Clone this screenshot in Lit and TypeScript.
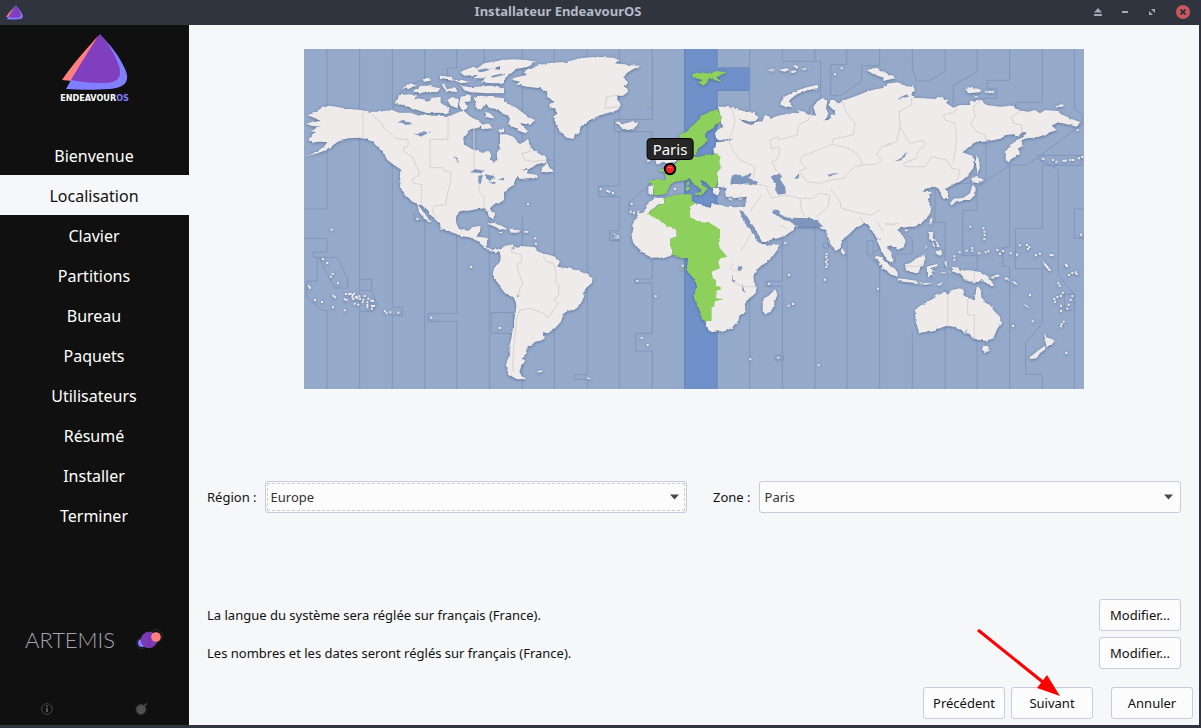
import { LitElement, html, css, svg } from "lit";
import { customElement, state } from "lit/decorators.js";
import { classMap } from "lit/directives/class-map.js";
import { styleMap } from "lit/directives/style-map.js";

interface Tile {
  x: number;
  y: number;
  land: string;
  active?: string;
  water?: string;
  borders?: string;
  islets?: number[][];
}

/* World map, split in eight sheets; each sheet has its own origin on the 2340 x 1020 canvas. */
const TILES: Tile[] = [
  {
    x: 0,
    y: -12,
    land: `M8,237 20,232 38,230 50,228 30,218 12,212 20,205 38,198 55,188 75,182 100,186 130,192 165,194 200,200 230,200 262,194 285,203 320,203 345,212 360,207 385,212 440,212 452,206 478,196 500,216 520,225 535,238 520,250 505,252 490,262 478,278 480,298 500,310 530,320 555,318 562,330 558,345 570,350 580,345 578,325 588,312 585,298 600,280 600,465 585,475 565,480 558,492 572,512 568,522 555,515 545,490 520,492 495,497 470,497 455,515 458,545 415,545 400,530 385,510 365,490 348,480 325,470 310,455 295,440 285,420 290,395 292,375 270,360 250,345 238,325 225,310 205,290 185,282 165,278 135,280 110,285 88,300 70,315 40,325 8,334 0,336 30,325 60,305 70,292 50,290 30,292 12,285 20,275 35,262 20,258 45,245 25,243Z
      M340,476 350,490 360,505 382,530 375,532 355,515 345,500Z
      M285,150 320,148 340,155 320,170 300,180 275,178Z
      M320,165 345,160 370,170 385,158 410,155 410,175 440,190 430,205 400,203 370,205 340,195 320,190 300,182Z
      M295,130 325,112 335,120 315,132Z M330,138 350,122 375,122 405,130 400,142 370,140 345,146Z
      M355,102 380,98 380,108 360,110Z M408,92 440,95 450,108 430,105 408,102Z M410,118 420,115 430,135 455,125 460,138 430,142Z
      M430,165 445,155 465,165 460,190 440,182Z M470,155 500,150 500,165 485,175 490,190 475,198 465,180Z
      M510,160 530,152 560,155 600,160 600,195 575,192 555,188 545,175 530,195 515,180Z
      M470,122 500,127 560,122 600,130 600,145 550,145 500,142 478,135Z
      M468,80 500,68 520,70 540,55 600,45 600,60 560,72 600,75 600,115 560,115 530,112 545,100 510,100 520,90 480,92Z
      M450,105 475,105 500,112 470,115Z M530,240 555,235 565,250 545,252 532,248Z M540,200 562,205 568,222 545,215Z M585,255 600,250 600,262 590,262Z`,
    water: `M280,232 300,225 310,230 328,235 305,240 295,234Z M333,265 355,262 383,260 365,268 350,275Z M448,332 458,340 466,355 458,350Z M498,382 515,372 543,378 525,384Z M523,392 537,390 530,417 523,415Z M542,388 572,393 562,408 548,402Z M552,414 578,408 572,417Z M578,404 600,398 600,406Z M520,75 545,70 560,74 530,82Z M560,92 600,85 600,90 565,98Z`,
    borders: `M177,197V280 M205,208 215,220 235,235 240,250 265,270 275,280 312,284 312,305 298,308 300,320 325,335 335,360 348,388 325,402 328,415 352,418 352,480 M432,215V283H378V368H415L420,378 440,382 440,410 430,445 425,480 390,482 385,500 400,520 M510,250V370 M527,420 525,440 540,455 538,480 545,492`,
  },
  {
    x: 588,
    y: -12,
    land: `M0,45 40,43 80,45 108,50 85,65 50,72 30,88 0,108Z
      M35,100 80,90 70,80 100,65 140,55 200,50 240,40 290,35 340,38 360,45 345,55 385,60 425,62 400,72 380,85 370,100 385,112 375,125 385,140 365,155 350,150 362,180 355,195 320,205 290,215 260,232 242,245 238,262 225,270 220,282 200,278 180,262 168,240 160,215 172,205 165,190 150,190 148,178 160,170 145,155 140,140 120,130 80,125 50,118 60,110 35,105Z
      M-5,158 20,175 45,185 65,200 85,215 105,225 90,240 60,235 85,260 70,265 40,245 25,238 30,220 -5,195Z
      M0,268 20,268 40,275 60,298 80,282 95,310 115,325 140,340 138,352 110,358 90,372 60,375 85,375 80,385 115,390 110,402 85,400 60,402 50,395 40,420 15,438 5,460 -5,465 -5,315 5,310 8,300 0,290Z
      M122,380 140,352 150,370 162,380 140,382Z
      M345,230 358,230 370,238 400,228 415,238 400,252 380,255 360,245Z
      M440,348 450,338 450,350Z M465,340 535,340 525,352 490,352 470,360Z
      M445,425 462,418 458,450 445,445Z
      M465,458 490,458 495,475 470,480 448,500 500,545 395,545 410,515 435,495 440,480Z
      M568,485 582,475 605,478 605,532 570,520Z`,
    active: `M605,216 585,235 560,260 538,270 540,290 575,290 605,300Z M580,338 540,345 525,355 510,370 480,372 478,378 495,385 498,405 450,405 445,412 462,420 460,450 480,450 500,445 510,420 525,410 560,405 575,400 585,408 605,425 605,335Z
      M560,412 567,412 567,420 560,422Z M558,425 568,425 568,437 558,437Z
      M492,460 510,452 545,448 575,448 575,470 586,476 570,485 570,520 605,534 605,545 500,545 450,500 470,482 495,475Z M445,182h8v4h-8z`,
    borders: `M90,300 90,320 65,325 75,345 100,350 138,345 M360,150 320,155 315,190 355,185`,
    islets: [[84, 478], [302, 433], [322, 438], [328, 440], [339, 444], [395, 476], [392, 500], [402, 503], [415, 500], [525, 432]],
  },
  {
    x: 1158,
    y: -12,
    land: `M83,185 100,185 125,188 140,192 165,200 195,205 205,215 198,228 180,230 160,225 148,222 165,235 185,240 195,232 215,228 225,210 240,215 240,222 262,212 290,208 310,203 328,205 320,195 345,200 350,210 365,208 378,212 370,185 385,165 400,160 412,170 408,190 415,205 410,220 400,226 415,225 425,208 440,210 430,195 415,180 425,165 445,175 465,165 500,152 530,140 560,132 605,125 605,545 540,545 525,535 505,545 400,545 385,522 310,518 300,528 325,545 -5,545 -5,480 20,478 45,485 62,488 65,478 85,478 110,485 140,487 165,482 170,455 130,460 108,455 105,440 110,430 85,425 80,380 92,365 85,350 90,335 72,325 70,310 78,300 78,292 100,290 78,280 75,265 82,255 100,245 92,230 90,205Z
      M68,428 88,428 83,452 74,448Z
      M270,178 283,155 312,140 350,127 383,119 383,129 350,137 322,147 302,162 297,170 308,187 280,184Z
      M530,75 560,68 585,85 605,95 575,97 550,88Z
      M230,75 255,73 250,80Z M268,74 290,70 300,75 280,80Z M310,65 325,62 322,72Z M330,72 358,68 345,76Z M300,78 320,76 312,84Z M115,460 132,462 118,465Z M145,461 160,459 150,465Z`,
    active: `M-5,252 20,235 40,210 60,200 80,193 90,205 92,230 75,240 70,250 50,260 45,275 55,285 40,300 25,310 20,320 10,322 -5,315Z M10,318 18,318 18,330 8,330Z
      M-5,335 30,335 50,330 80,325 92,335 88,350 92,365 80,380 85,395 80,425 65,430 50,415 30,400 15,395 20,405 30,415 50,430 45,440 35,450 30,445 35,435 15,420 -5,400Z
      M15,443 35,443 30,452Z M-5,450 6,455 3,470 -5,477Z
      M5,88 30,82 50,85 80,78 110,82 100,90 80,95 95,110 70,105 60,100 50,115 40,122 25,112 38,105 10,98Z`,
    water: `M118,412 128,390 150,386 150,395 165,394 185,382 175,398 205,412 200,420 170,415 140,420 120,420Z M242,395 265,383 280,390 270,402 285,425 288,445 265,450 255,435 258,420Z M315,395 328,385 326,400 318,402Z M413,390 430,385 452,385 430,389 418,395Z M248,492 262,495 275,510 295,518 330,520 380,525 400,545 325,545 300,530 285,525 265,515 250,505Z M148,495 160,500 175,525 189,545 170,545 158,522Z M92,284 130,281 118,287 95,290Z`,
    borders: `M125,190 135,225 128,255 115,285 130,320 150,345 195,365 190,400 M365,205 355,225 325,240 322,270 285,280 265,285 265,275 240,285 245,312 265,305 270,320 260,345 245,350 260,380 M460,170 465,195 495,235 490,270 430,282 425,298 335,335 330,350 350,370 328,378 350,410 390,415 420,405 460,400 495,365 520,360 500,325 470,308 425,298 M520,360 560,358 575,345 560,330 575,305 600,295 M205,418 235,425 M230,430 245,460 285,450 330,460 335,500 345,515 M330,460 370,460 385,445 420,450 415,485 380,515 M420,430 450,470 455,490 510,505 545,510 570,495 M215,450 180,500`,
    islets: [[455, 70], [435, 88]],
  },
  {
    x: 1743,
    y: -12,
    land: `M-5,125 15,115 40,112 50,122 85,125 90,135 80,148 70,155 60,150 88,150 85,158 120,160 150,162 160,155 190,165 185,175 205,188 225,180 255,180 255,168 285,165 305,180 345,185 385,182 395,195 430,200 450,195 465,205 480,195 520,198 535,210 560,222 587,232 575,245 545,238 520,232 500,242 515,255 480,268 450,278 425,280 410,285 412,300 400,315 405,325 380,345 370,352 362,345 362,320 375,300 390,290 410,278 425,262 410,262 400,275 385,268 365,270 345,282 300,290 275,290 250,310 232,322 262,332 270,345 265,370 245,395 225,410 200,420 180,432 190,445 190,462 175,462 168,445 160,430 145,425 120,432 115,440 140,440 135,455 128,465 140,485 135,505 120,525 90,545 -5,545Z
      M275,330 283,350 285,375 278,388 275,370 272,350Z M262,400 275,393 297,405 280,415 262,412Z M265,420 272,430 270,450 255,465 235,465 215,468 200,482 195,475 205,462 235,458 255,445 260,425Z M135,522 143,518 138,535 132,538Z
      M240,133 260,126 290,135 285,142 250,145Z M298,137 330,139 328,144 305,143Z M262,152 280,155 275,160Z M512,180 535,178 535,185 515,186Z M-5,95 20,90 35,100 10,104 -5,108Z`,
    water: `M28,350 50,338 64,318 60,335 45,346Z M36,162 65,148 72,155Z`,
    borders: `M80,160 80,180 42,200 45,245 65,280 75,295 115,285 122,300 100,315 95,340 55,355 60,365 120,365 140,335 185,345 200,370 225,375 215,410 185,430 M45,245 35,290 0,305 M215,190 210,200 175,210 180,225 210,235 215,280 210,320 205,350 M285,170 265,185 270,215 258,235 275,260 300,270 305,290 M405,200 380,215 385,235 410,240 410,265 M0,535 30,540`,
    islets: [[475, 342], [504, 345], [514, 350], [536, 347], [542, 347], [556, 345], [564, 345], [582, 340], [578, 255], [592, 336]],
  },
  {
    x: 0,
    y: 498,
    land: `M375,-5 458,-5 455,20 465,42 490,47 505,35 527,33 525,50 518,65 550,68 548,95 565,105 585,102 605,105 605,115 585,108 575,115 560,110 540,95 520,78 500,68 470,62 440,50 412,40 408,25 395,15Z M350,-12 358,-8 382,22 370,15 358,2Z`,
    islets: [
      [57, 132], [70, 144], [86, 177], [80, 185], [102, 205], [14, 214], [18, 218], [33, 255], [54, 261], [88, 242], [93, 247],
      [87, 277], [122, 286], [126, 237], [135, 238], [122, 253], [128, 255], [140, 236], [146, 240], [150, 236], [145, 246], [155, 247],
      [160, 250], [166, 244], [158, 245], [168, 252], [182, 243], [178, 254], [176, 262], [193, 251], [190, 262], [190, 270],
      [190, 277], [202, 257], [207, 258], [204, 273], [210, 273], [204, 281], [152, 266], [163, 269], [148, 252], [243, 289],
      [248, 295], [259, 292], [283, 293], [382, 308], [501, 156], [587, 339], [83, 44], [340, 12],
    ],
  },
  {
    x: 528,
    y: 498,
    land: `M62,102 75,92 100,88 105,95 125,93 165,97 175,110 200,118 225,125 240,140 232,155 255,158 290,165 320,178 338,190 335,205 315,222 312,245 300,270 290,280 262,290 248,298 245,318 225,340 205,355 188,352 195,368 185,377 160,380 155,395 140,397 140,415 125,430 135,440 125,450 118,470 125,480 138,492 115,493 100,488 85,480 80,465 78,450 82,435 90,420 88,395 95,365 100,330 107,290 110,260 100,248 75,235 60,215 45,190 38,178 42,160 60,140 62,125 58,108Z
      M18,25 45,25 80,40 78,44 58,42 40,33Z M88,43 120,46 118,53 92,53Z M56,48 68,49 66,55 58,54Z M133,47 148,48 147,53 134,53Z M30,-8 45,-8 43,12 35,6Z
      M172,468 188,466 186,471 175,473Z M318,486 332,490 328,493Z M400,57 418,62 415,72 403,70Z
      M470,-5 510,-5 530,8 560,25 590,45 590,65 570,72 570,90 578,105 575,120 560,127 515,128 495,118 475,100 460,85 455,65 460,40 458,28 475,5Z
      M620,-5 665,-5 665,28 645,18Z`,
    active: `M500,-5 628,-5 632,8 665,25 665,300 655,275 642,250 645,230 652,215 640,190 620,165 625,130 610,130 595,122 575,120 578,105 570,90 570,72 590,65 590,45Z M597,158h10v6h-10z`,
    water: `M402,62 412,62 410,67 402,67Z M97,96 103,97 102,104 98,103Z M111,240 118,242 117,246 111,245Z`,
    borders: `M92,95 95,112 125,120 125,140 112,145 115,170 128,205 118,225 115,245 M190,125 200,140 220,145 228,175 228,205 238,210 235,240 220,255 235,265 205,308 190,295 150,280 120,285 110,310 102,390 98,440 100,470`,
    islets: [[472, 198], [527, 244], [485, 369], [503, 390], [59, 339], [608, 152], [166, 70], [168, 86]],
  },
  {
    x: 1158,
    y: 498,
    land: `M-5,-5 150,-5 165,25 190,55 212,85 230,92 268,88 262,105 245,128 225,145 205,160 190,180 192,200 200,215 198,235 180,248 163,265 168,285 160,295 148,302 145,318 125,338 105,348 75,350 62,352 55,345 45,316 60,280 60,60 -5,18Z
      M218,262 222,250 240,240 255,222 262,238 250,275 240,295 225,298 218,285Z
      M165,-5 290,-5 305,10 322,28 310,45 285,62 265,70 240,75 218,82 205,60 188,28Z
      M365,-5 605,-5 605,92 590,98 605,112 605,122 582,110 575,95 572,72 560,70 552,55 540,40 528,25 515,30 500,35 475,60 455,75 452,100 438,108 425,95 412,70 408,45 390,38 372,12Z
      M457,100 467,110 462,120 455,115Z M555,124 575,130 605,160 605,175 580,148Z`,
    active: `M-5,15 35,22 60,25 90,42 90,70 85,80 90,100 112,125 92,130 85,140 90,160 65,170 68,190 78,195 78,213 92,215 92,225 80,230 78,250 100,252 95,256 75,258 72,278 65,280 65,318 45,318 35,310 30,280 12,250 15,235 22,215 20,190 -5,165Z`,
    water: `M142,155 157,153 152,168 142,166Z M124,175 135,200 130,202Z M157,205 164,232 157,227Z M152,2 170,2 190,33 206,60 219,84 208,84 188,56 166,26Z`,
    borders: `M185,50 165,90 152,110 M130,145 120,160 140,170 M125,200 160,215 198,215 M270,30 290,40 M510,5 520,25 M560,20 580,50`,
    islets: [
      [297, 180], [237, 206], [296, 272], [309, 267], [181, 433], [265, 428], [386, 451], [405, 194], [564, 221], [410, 118],
      [409, 126], [412, 134], [408, 141], [412, 148], [409, 156], [286, 84], [570, 148], [578, 160],
    ],
  },
  {
    x: 1743,
    y: 498,
    land: `M-5,-10 138,-10 120,15 100,22 75,32 60,38 45,35 38,45 55,62 62,80 55,95 40,104 30,98 15,92 -5,85Z
      M-15,70 -5,95 15,115 25,135 22,145 5,135 -12,105 -22,75Z M58,45 70,42 65,50Z
      M-30,125 0,140 20,155 38,172 38,185 15,178 -10,150Z M38,190 65,193 95,197 95,204 60,201 40,198Z M100,202 130,204 145,203 120,210Z M155,209 174,201 165,212Z
      M60,148 75,145 95,130 118,118 122,130 115,145 108,160 95,175 75,170 62,162Z M125,155 155,147 160,152 135,160 148,165 140,172 150,182 138,179 130,188 126,175Z
      M132,50 145,52 143,68 152,82 140,78 133,68Z M150,78 160,85 168,98 158,92Z M150,112 168,104 172,118 160,122Z M142,84 150,92 150,98 143,92Z M135,15 143,10 138,26Z M114,104 128,92 128,96Z
      M200,155 220,158 225,168 250,165 290,172 310,185 328,212 310,208 285,195 268,205 240,195 230,180 205,170Z M315,188 338,178 345,182 325,191Z M170,172 182,172 182,175 170,175Z M178,142 186,142 183,158Z M190,170 200,170 200,174Z
      M90,285 105,272 130,262 145,250 155,238 175,232 190,238 200,225 225,220 238,225 235,240 250,250 268,252 272,235 275,215 285,220 290,245 300,262 315,270 325,285 345,305 348,325 335,345 325,370 300,378 285,375 262,370 255,358 248,355 240,358 230,345 205,335 185,332 165,340 140,350 115,352 102,355 100,345 92,320Z
      M290,392 313,393 310,408 300,412 292,405Z M477,355 488,368 510,375 500,390 485,397 482,385Z M480,392 482,402 465,415 455,430 435,433 440,422 462,405Z
      M357,187 368,191 374,198 362,194Z M378,196 390,200 402,212 390,208Z M418,267 434,276 432,279 420,272Z M474,137 486,150 500,168 492,168 477,150Z`,
    water: `M238,352 248,342 246,358Z`,
    borders: `M188,238V335 M248,252V300H268V372 M268,170V205 M62,152 95,155 110,148 M0,30 40,25`,
    islets: [
      [256, 35], [295, 40], [298, 50], [299, 60], [298, 72], [208, 124], [208, 134], [224, 112], [245, 107], [262, 99], [262, 107],
      [283, 115], [302, 112], [310, 109], [337, 105], [345, 116], [354, 108], [377, 115], [396, 119], [404, 91], [426, 90],
      [433, 96], [429, 102], [453, 121], [465, 116], [497, 120], [503, 121], [543, 149], [546, 153], [552, 180], [562, 174],
      [572, 172], [575, 177], [520, 205], [524, 212], [533, 233], [517, 246], [508, 252], [510, 260], [528, 243], [562, 243],
      [557, 254], [551, 269], [547, 281], [528, 272], [528, 288], [536, 320], [530, 327], [528, 334], [443, 319], [384, 333],
      [544, 414], [588, 59], [435, 240],
    ],
  },
];

const ZONE_LINES = `M69,0V480H0 M167,0V1020 M265,0V178L300,115 362,90V0 M265,300V775H295V799H265V1020 M458,0V57H430V100 M331,488V516H362 M362,478V1020 M458,560V793H371V817H458V1020 M541,0V70 M556,510V1020 M562,791H630V853H562Z M655,0V300 M655,500V1020 M751,0V1020 M690,333H751 M850,0V977H811V991H850V1020 M946,0V211 M1045,0V211H931V248H1045V268 M946,248V411H884V443H946V545H917V575H946V1020 M1045,618V690H992V702H1045V853H995V906H1045V1020 M975,495V462L1035,408
 M1337,0V190 M1238,56H1337 M1337,740V1020 M1435,0V37H1550V145L1516,175V195 M1533,0V37 M1628,0V47H1580V140H1605 M1727,0V50H1673V95L1610,140 M1435,560V697H1385V712H1435V1020 M1533,520V1020 M1629,570V1020 M1690,575h18v42h-18z M1708,610 1727,600 M1690,617 1727,652V1020 M1412,919h26v14h-26z M1558,583h16v14h-16z
 M1825,0V55L1838,97 1875,95 1923,68V0 M2019,0V70L1948,108V165 M2117,0V94H2050V118H2078V148H2030 M2215,0V160H2135V180 M2311,0V178L2335,198V225L2170,348H2117L2019,415V484H1976V620H2019V660L2010,670 M2046,278V390L1985,404H1940 M2117,348V595H2096V651H2117V1020 M2198,328 2263,362V678L2311,735V1020 M2198,319H2333V349H2215 M2215,349V538H2134V659H2215V822L2165,883V976H2215V1020 M2340,480H2311V568H2340 M1825,850V1020 M1810,560 1825,570V615H1775V640 M1923,720V1020 M1893,420V520H1923V660 M2019,870V1020 M2281,736h31v48h-31z
 M0,568H69V609H27V625H99L131,690V717H92L45,625 M40,625V697H8V745L53,784H69V1020 M167,787H203L220,767 203,724H167 M167,691H203V724`;

const STEPS = ["Bienvenue", "Localisation", "Clavier", "Partitions", "Bureau", "Paquets", "Utilisateurs", "Résumé", "Installer", "Terminer"];

const sail = svg`
  <path fill="#ff7f7f" d="M37 1C25 14 10 31 0 46l10 1z"/>
  <path fill="#7f7fff" d="M38 1c10 9 20 22 25 34 6 13-1 19-15 20-14 1-30 1-44 0l5-9z"/>
  <path fill="#7f3fbf" d="M38 0c8 9 15 20 19 32 4 14-4 17-17 17-11 0-21-1-31-3C18 31 28 14 38 0z"/>`;

@customElement("world-map")
class WorldMap extends LitElement {
  static styles = css`
    :host { display: block; position: relative; width: 100%; max-width: 780px; }
    .map { display: block; width: 100%; height: auto; background: #95a9ca; }
    .zones { fill: none; stroke: #8196ba; stroke-width: 3; }
    .band { fill: #6f90c8; stroke: #6382b8; stroke-width: 3; }
    .shade { filter: drop-shadow(0 2px 5px rgba(62, 88, 130, 0.75)); }
    .land { fill: #efebea; }
    .active { fill: #8dd15c; }
    .water { fill: #7f96bc; }
    .borders { fill: none; stroke: #d6d2d1; stroke-width: 3; }
    .pin { position: absolute; width: 14px; height: 14px; transform: translate(-50%, -50%); }
    .dot { display: block; width: 14px; height: 14px; }
    .name {
      position: absolute; bottom: 16px; left: 50%; transform: translateX(-50%);
      padding: 0 5px; border: 1px solid #000; border-radius: 4px;
      background: #262626; color: #fff; font-size: 15px; line-height: 20px;
    }
  `;

  render() {
    const pin = { left: (366 / 780) * 100 + "%", top: (120 / 340) * 100 + "%" };
    return html`
      <svg class="map" viewBox="0 0 2340 1020" role="img" aria-label="Fuseaux horaires">
        <defs>
          <filter id="coast" x="0" y="0" width="100%" height="100%">
            <feTurbulence type="fractalNoise" baseFrequency="0.06" numOctaves="2" seed="4" result="n" />
            <feDisplacementMap in="SourceGraphic" in2="n" scale="9" xChannelSelector="R" yChannelSelector="G" />
          </filter>
        </defs>
        <path class="band" d="M1142,-5H1239V56H1337V124H1239V1025H1142Z" />
        <path class="zones" d=${ZONE_LINES} />
        <g class="shade">
          <g filter="url(#coast)">
            <rect width="2340" height="1020" fill="none" />
            ${TILES.map((t) => svg`<g transform="translate(${t.x} ${t.y})"><path class="land" d=${t.land} /></g>`)}
            ${TILES.map((t) => svg`<g transform="translate(${t.x} ${t.y})"><path class="active" d=${t.active ?? ""} /><path class="water" d=${t.water ?? ""} /></g>`)}
          </g>
          ${TILES.map((t) => svg`<g transform="translate(${t.x} ${t.y})"><path class="borders" d=${t.borders ?? ""} /><path class="land" d=${(t.islets ?? []).map(([x, y]) => `M${x - 3},${y - 3}h6v6h-6z`).join("")} /></g>`)}
        </g>
      </svg>
      <div class="pin" style=${styleMap(pin)}>
        <svg class="dot" viewBox="0 0 14 14" aria-hidden="true">
          <circle cx="7" cy="7" r="5.2" fill="#e8232a" stroke="#000" stroke-width="2" />
          <path d="M4.5 6a3 3 0 0 1 5 0z" fill="#f4686a" />
        </svg>
        <span class="name">Paris</span>
      </div>
    `;
  }
}

@customElement("app-root")
class AppRoot extends LitElement {
  @state() private current = 1;

  static styles = css`
    :host {
      display: grid; grid-template-rows: 25px 1fr; box-sizing: border-box; min-height: 100vh;
      padding: 0 2px 3px 0; background: #2f343f; color: #111;
      font-family: "Noto Sans", sans-serif; font-size: 13px; line-height: 20px;
    }
    * { box-sizing: border-box; }
    svg { display: block; }
    .bar { display: flex; align-items: center; margin-right: -2px; padding-left: 6px; height: 25px; }
    .mark { width: 17px; height: 15px; margin-right: 9px; }
    .title { flex: 1; margin: 0; padding-bottom: 3px; text-align: center; font-size: 13px; line-height: 20px; font-weight: 700; color: #b4bac6; }
    .wm { display: flex; padding-bottom: 2px; }
    .wm button { display: grid; place-items: center; width: 27px; height: 22px; padding: 0; border: 0; background: none; }
    .wm button:last-child { width: 36px; }
    .body { display: grid; grid-template-columns: 189px 1fr; }
    .side { display: flex; flex-direction: column; background: #101010; padding-top: 9px; }
    .logo { align-self: center; width: 66px; height: 56px; }
    .brand { margin-bottom: 29px; text-align: center; font: 700 9px/16px "DejaVu Sans Condensed", "DejaVu Sans", sans-serif; color: #fff; }
    .os { color: #7f7fff; }
    .steps { list-style: none; margin: 0; padding: 0; }
    .step { height: 40px; padding-right: 1px; font-size: 16px; line-height: 42px; text-align: center; color: #fff; }
    .step.on { background: #f5f7f8; color: #111; }
    .release { display: flex; align-items: center; justify-content: space-between; margin-top: auto; padding: 0 26px 0 25px; font: 300 22px/24px Lato, sans-serif; color: #a5a5b0; }
    .moon { width: 27px; height: 22px; }
    .links { display: flex; justify-content: space-around; padding: 45px 0 4px; }
    .links button { display: grid; place-items: center; width: 24px; height: 24px; padding: 0; border: 0; background: none; }
    .main { display: flex; flex-direction: column; background: #f5f7f8; padding-top: 24px; }
    .page { flex: 1; display: flex; flex-direction: column; justify-content: space-between; padding: 0 18px; }
    .mapbox { display: flex; justify-content: center; padding-bottom: 6px; }
    .fields { display: grid; grid-template-columns: auto 1fr auto 1fr; align-items: center; column-gap: 8px; }
    .zone { margin-left: 18px; }
    .pick { display: grid; align-items: center; justify-items: end; }
    .pick select, .pick svg { grid-area: 1 / 1; }
    .pick svg { margin-right: 8px; pointer-events: none; }
    select {
      appearance: none; width: 100%; height: 32px; margin: 0; padding: 0 5px; border: 1px solid #c5cbdd;
      border-radius: 3px; background: #fcfcfc; color: #333; font: inherit;
      outline: none;
    }
    .focus select { outline: 1px dashed #ccc; outline-offset: -3px; }
    .locale { display: grid; gap: 6px; }
    .line { display: flex; align-items: center; justify-content: space-between; }
    .line p { margin: 0; }
    .btn {
      width: 82px; height: 32px; padding: 0; border: 1px solid #c5cbdd; border-radius: 3px;
      background: #fcfcfc; color: #111; font: inherit; text-align: center;
    }
    .foot { display: flex; justify-content: flex-end; gap: 6px; padding: 18px 6px 6px; }
    .next { position: relative; margin-right: 12px; }
    .arrow { position: absolute; right: 31px; bottom: 22px; width: 86px; height: 70px; pointer-events: none; }
  `;

  render() {
    const caret = html`<svg width="9" height="6" viewBox="0 0 9 6" aria-hidden="true"><path d="M0 .5h9L4.500 5.500z" fill="#4a4a4a" /></svg>`;
    return html`
      <header class="bar">
        <svg class="mark" viewBox="0 0 66 57" aria-hidden="true">${sail}</svg>
        <h1 class="title">Installateur EndeavourOS</h1>
        <div class="wm">
          <button aria-label="Enrouler"><svg width="8" height="8"><path fill="#a3a9b6" d="M4 0l4 4.500H0zM0 6h8v2H0z" /></svg></button>
          <button aria-label="Réduire"><svg width="6" height="2"><path fill="#a3a9b6" d="M0 0h6v2H0z" /></svg></button>
          <button aria-label="Agrandir"><svg width="6" height="6"><path fill="#a3a9b6" d="M2 0h4v4zM0 2l4 4H0z" /></svg></button>
          <button aria-label="Fermer"><svg width="14" height="14"><circle cx="7" cy="7" r="7" fill="#cc575d" /><path d="M4.500 4.500l5 5m0-5l-5 5" stroke="#2f343f" stroke-width="1.800" /></svg></button>
        </div>
      </header>
      <div class="body">
        <aside class="side">
          <svg class="logo" viewBox="0 0 66 56" aria-hidden="true">${sail}</svg>
          <div class="brand">ENDEAVOUR<span class="os">OS</span></div>
          <ol class="steps">
            ${STEPS.map((s, i) => html`<li class=${classMap({ step: true, on: i === this.current })}>${s}</li>`)}
          </ol>
          <div class="release">
            <span>ARTEMIS</span>
            <svg class="moon" viewBox="0 0 27 22" aria-hidden="true">
              <circle cx="6" cy="14" r="5.500" fill="none" stroke="#333" stroke-width=".8" />
              <circle cx="20" cy="7" r="6.300" fill="none" stroke="#333" stroke-width=".8" />
              <circle cx="6" cy="14" r="4" fill="#7f7fff" />
              <circle cx="13" cy="11" r="8.200" fill="#7a3bb5" />
              <path d="M14 5c-2 4-2 8 0 13" fill="none" stroke="#6a34a0" stroke-width=".8" />
              <circle cx="20" cy="8" r="4.800" fill="#ff7f7f" />
            </svg>
          </div>
          <div class="links">
            <button aria-label="À propos"><svg width="12" height="12"><circle cx="6" cy="6" r="5.300" fill="none" stroke="#484848" /><path fill="#565656" d="M5 5h2v4H5zM5 2.500h2v1.500H5z" /></svg></button>
            <button aria-label="Débogage"><svg width="13" height="12"><circle cx="6" cy="6.500" r="5" fill="#505050" stroke="#333" /><path d="M9 3l3-2.500" stroke="#505050" stroke-width="1.500" /></svg></button>
          </div>
        </aside>
        <main class="main">
          <div class="page">
            <div class="mapbox"><world-map></world-map></div>
            <div class="fields">
              <label for="region">Région :</label>
              <div class="pick focus"><select id="region"><option>Europe</option></select>${caret}</div>
              <label class="zone" for="zone">Zone :</label>
              <div class="pick"><select id="zone"><option>Paris</option></select>${caret}</div>
            </div>
            <div class="locale">
              <div class="line"><p>La langue du système sera réglée sur français (France).</p><button class="btn">Modifier...</button></div>
              <div class="line"><p>Les nombres et les dates seront réglés sur français (France).</p><button class="btn">Modifier...</button></div>
            </div>
          </div>
          <footer class="foot">
            <button class="btn" @click=${() => (this.current = Math.max(0, this.current - 1))}>Précédent</button>
            <div class="next">
              <button class="btn" @click=${() => (this.current = Math.min(STEPS.length - 1, this.current + 1))}>Suivant</button>
              <svg class="arrow" viewBox="0 0 86 70" aria-hidden="true">
                <path d="M2 3l66 53" stroke="#f00" stroke-width="3" />
                <path d="M84 69L61 61 71 48z" fill="#f00" />
              </svg>
            </div>
            <button class="btn">Annuler</button>
          </footer>
        </main>
      </div>
    `;
  }
}
